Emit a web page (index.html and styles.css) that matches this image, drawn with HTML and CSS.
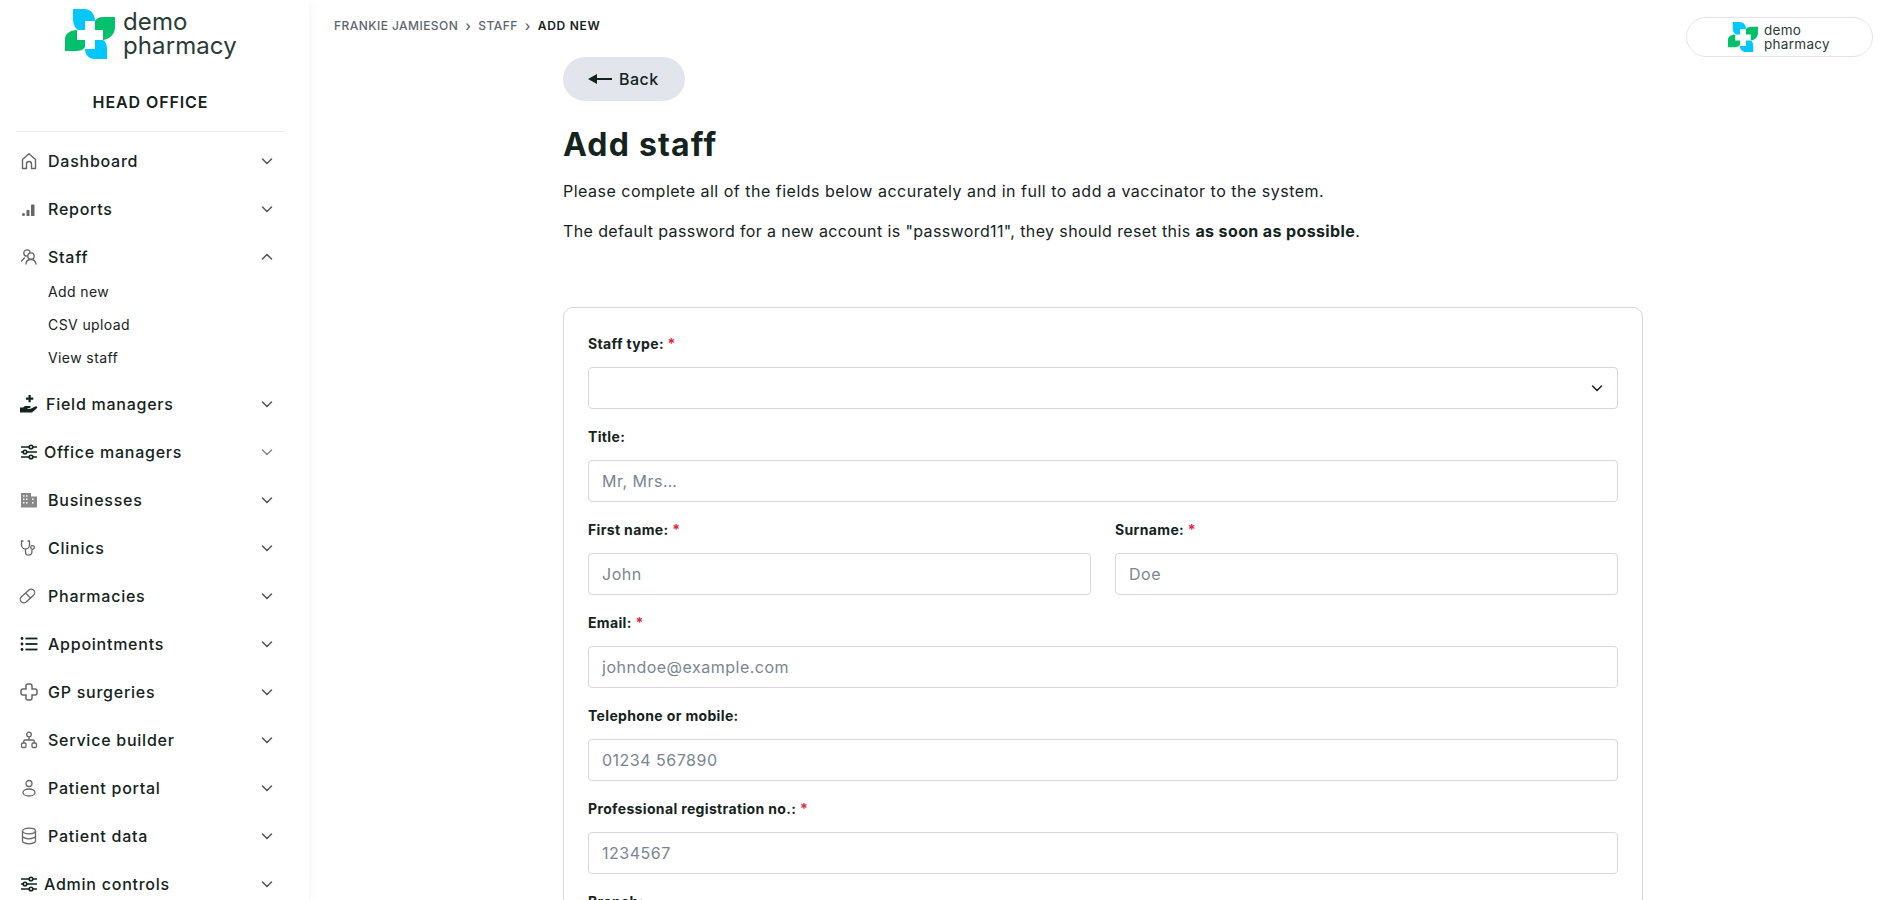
FILE: index.html
```html
<!DOCTYPE html>
<html>
<head>
<meta charset="utf-8"/>
<title>Add staff</title>
<link rel="stylesheet" href="styles.css">
</head>
<body>
<svg class="defs" width="0" height="0">
  <symbol id="logo" viewBox="0 0 50 50">
    <path fill="#00c8ff" d="M8 0H19C26 0 30 5 30 12H20V21H13C10 19 8 15 8 10Z"/>
    <path fill="#00c06b" d="M50 8V18C50 25 45 30 38 31V21H30V12C31 10 34 8 38 8Z"/>
    <path fill="#00c06b" d="M0 42V30C0 25 5 21 12 21V31H20V38C18 41 15 42 11 42Z"/>
    <path fill="#00c8ff" d="M42 50H30C24 50 20 46 20 40H30V31H38C41 33 42 36 42 40Z"/>
  </symbol>
  <symbol id="chev" viewBox="0 0 12 12"><path d="M1.500 4l4.500 4.500L10.500 4" fill="none" stroke="currentColor" stroke-width="1.500" stroke-linecap="round" stroke-linejoin="round"/></symbol>
  <symbol id="sliders" viewBox="0 0 18 18"><g fill="none" stroke="currentColor" stroke-width="1.600"><path d="M1 4h8M13 4h4M1 9h2M7 9h10M1 14h8M13 14h4"/><circle cx="11" cy="4" r="1.800"/><circle cx="5" cy="9" r="1.800"/><circle cx="11" cy="14" r="1.800"/></g></symbol>
</svg>

<div class="g-page">
  <!-- sidebar -->
  <aside class="m-side">
    <div class="side-logo">
      <svg class="logo-ico"><use href="#logo"/></svg>
      <div class="logo-txt">demo<br>pharmacy</div>
    </div>
    <div class="side-org">HEAD OFFICE</div>

    <nav class="side-nav">
      <a class="nav-row">
        <svg class="ico" viewBox="0 0 18 18"><path d="M2.500 16.500V7.500L9 1.800l6.500 5.700v9h-4v-4.500a2.500 2.500 0 0 0-5 0v4.500z" fill="none" stroke="currentColor" stroke-width="1.400" stroke-linejoin="round"/></svg>
        <span class="nav-txt">Dashboard</span><svg class="chev"><use href="#chev"/></svg>
      </a>
      <a class="nav-row">
        <svg class="ico" viewBox="0 0 18 18"><g fill="currentColor"><rect x="2" y="13" width="3" height="3" rx="1.500"/><rect x="6.500" y="10" width="3" height="6" rx=".6"/><rect x="11" y="4.500" width="3.500" height="11.500" rx=".6"/></g></svg>
        <span class="nav-txt">Reports</span><svg class="chev"><use href="#chev"/></svg>
      </a>
      <a class="nav-row">
        <svg class="ico" viewBox="0 0 18 18"><g fill="none" stroke="currentColor" stroke-width="1.300" stroke-linecap="round"><circle cx="7" cy="5" r="3.200"/><circle cx="11" cy="8" r="3.200" fill="#fff"/><path d="M1.500 13l3-3M6 16c0-3 2-4.500 5-4.500s4.500 1.500 5 4.500"/></g></svg>
        <span class="nav-txt">Staff</span><svg class="chev up"><use href="#chev"/></svg>
      </a>
      <ul class="nav-sub">
        <li>Add new</li>
        <li>CSV upload</li>
        <li>View staff</li>
      </ul>
      <a class="nav-row tight-a">
        <svg class="ico dark" viewBox="0 0 18 18"><path fill="currentColor" d="M8.500 0h2.200v2.500h2.600v2.200h-2.600v2.600H8.500V4.700H6V2.500h2.500zM0 12.500h3l2-1.500h4.500c1.500 0 1.500 2 0 2H7.500v.7h3l4.800-2.200c1.500-.7 2.700 1 1.300 2L12 17.500H0z"/></svg>
        <span class="nav-txt">Field managers</span><svg class="chev"><use href="#chev"/></svg>
      </a>
      <a class="nav-row tight-b">
        <svg class="ico dark"><use href="#sliders"/></svg>
        <span class="nav-txt">Office managers</span><svg class="chev faint"><use href="#chev"/></svg>
      </a>
      <a class="nav-row">
        <svg class="ico soft" viewBox="0 0 18 18"><path fill="currentColor" fill-rule="evenodd" d="M1 2h10v3.500h6V16.500H1zM3 4.200v1.500h1.500V4.200zm3 0v1.500h1.500V4.200zM3 7.500V9h1.500V7.500zm3 0V9h1.500V7.500zm6 0V9h1.500V7.500zM3 11v1.500h1.500V11zm3 0v1.500h1.500V11zm6 0v1.500h1.500V11z"/></svg>
        <span class="nav-txt">Businesses</span><svg class="chev"><use href="#chev"/></svg>
      </a>
      <a class="nav-row">
        <svg class="ico" viewBox="0 0 18 18"><g fill="none" stroke="currentColor" stroke-width="1.300" stroke-linecap="round"><path d="M3 2H1.500v4a4 4 0 0 0 8 0V2H8M5.500 10v3a3.200 3.200 0 0 0 6.400 0v-1.500"/><circle cx="12.500" cy="8.500" r="1.800"/></g></svg>
        <span class="nav-txt">Clinics</span><svg class="chev"><use href="#chev"/></svg>
      </a>
      <a class="nav-row">
        <svg class="ico" viewBox="0 0 18 18"><g fill="none" stroke="currentColor" stroke-width="1.300"><rect x="-1" y="5.500" width="17" height="7" rx="3.500" transform="rotate(-42 7.500 9)"/><path d="M6 6.500l5 5"/></g></svg>
        <span class="nav-txt">Pharmacies</span><svg class="chev"><use href="#chev"/></svg>
      </a>
      <a class="nav-row">
        <svg class="ico dark" viewBox="0 0 18 18"><g fill="currentColor"><circle cx="2" cy="3.500" r="1.400"/><circle cx="2" cy="9" r="1.400"/><circle cx="2" cy="14.500" r="1.400"/><rect x="5.500" y="2.600" width="12" height="1.800"/><rect x="5.500" y="8.100" width="12" height="1.800"/><rect x="5.500" y="13.600" width="12" height="1.800"/></g></svg>
        <span class="nav-txt">Appointments</span><svg class="chev"><use href="#chev"/></svg>
      </a>
      <a class="nav-row">
        <svg class="ico" viewBox="0 0 18 18"><path d="M6 3a2 2 0 0 1 2-2h2a2 2 0 0 1 2 2v3h3a2 2 0 0 1 2 2v2a2 2 0 0 1-2 2h-3v3a2 2 0 0 1-2 2H8a2 2 0 0 1-2-2v-3H3a2 2 0 0 1-2-2V8a2 2 0 0 1 2-2h3z" fill="none" stroke="currentColor" stroke-width="1.500"/></svg>
        <span class="nav-txt">GP surgeries</span><svg class="chev"><use href="#chev"/></svg>
      </a>
      <a class="nav-row">
        <svg class="ico" viewBox="0 0 18 18"><g fill="none" stroke="currentColor" stroke-width="1.300"><circle cx="9" cy="3.500" r="2.300"/><rect x="1.500" y="12" width="4.500" height="4.500" rx="1.200"/><rect x="12" y="12" width="4.500" height="4.500" rx="1.200"/><path d="M9 6v3M3.700 12v-1.500a1.500 1.500 0 0 1 1.500-1.500h7.600a1.500 1.500 0 0 1 1.500 1.500V12"/></g></svg>
        <span class="nav-txt">Service builder</span><svg class="chev"><use href="#chev"/></svg>
      </a>
      <a class="nav-row">
        <svg class="ico" viewBox="0 0 18 18"><g fill="none" stroke="currentColor" stroke-width="1.300"><circle cx="9" cy="4.500" r="3"/><ellipse cx="9" cy="13.500" rx="6" ry="3.500"/></g></svg>
        <span class="nav-txt">Patient portal</span><svg class="chev"><use href="#chev"/></svg>
      </a>
      <a class="nav-row">
        <svg class="ico" viewBox="0 0 18 18"><g fill="none" stroke="currentColor" stroke-width="1.300"><ellipse cx="9" cy="4" rx="6.500" ry="2.800"/><path d="M2.500 4v10c0 1.500 3 2.800 6.500 2.800s6.500-1.300 6.500-2.800V4M2.500 9c0 1.500 3 2.800 6.500 2.800s6.500-1.300 6.500-2.800"/></g></svg>
        <span class="nav-txt">Patient data</span><svg class="chev"><use href="#chev"/></svg>
      </a>
      <a class="nav-row tight-b">
        <svg class="ico dark"><use href="#sliders"/></svg>
        <span class="nav-txt">Admin controls</span><svg class="chev"><use href="#chev"/></svg>
      </a>
    </nav>
  </aside>

  <!-- main -->
  <main class="m-main">
    <header class="main-top">
      <div class="crumbs">
        <span>FRANKIE JAMIESON</span><i>&#8250;</i><span>STAFF</span><i>&#8250;</i><b>ADD NEW</b>
      </div>
      <div class="top-pill">
        <svg class="pill-ico"><use href="#logo"/></svg>
        <div class="pill-txt">demo<br>pharmacy</div>
      </div>
    </header>

    <section class="main-con">
      <a class="btn-back">
        <svg class="back-ico" viewBox="0 0 24 12"><path d="M0 6l9-5v4h15v2H9v4z" fill="currentColor"/></svg>
        Back
      </a>
      <h1>Add staff</h1>
      <p class="intro">Please complete all of the fields below accurately and in full to add a vaccinator to the system.</p>
      <p>The default password for a new account is "password11", they should reset this <strong>as soon as possible</strong>.</p>

      <form class="m-card">
        <div class="fld">
          <label>Staff type: <em>*</em></label>
          <div class="sel-wrap">
            <select><option></option></select>
            <svg class="sel-chev"><use href="#chev"/></svg>
          </div>
        </div>
        <div class="fld">
          <label>Title:</label>
          <input type="text" placeholder="Mr, Mrs…">
        </div>
        <div class="fld-row">
          <div class="fld">
            <label>First name: <em>*</em></label>
            <input type="text" placeholder="John">
          </div>
          <div class="fld">
            <label>Surname: <em>*</em></label>
            <input type="text" placeholder="Doe">
          </div>
        </div>
        <div class="fld">
          <label>Email: <em>*</em></label>
          <input type="text" placeholder="johndoe@example.com">
        </div>
        <div class="fld">
          <label>Telephone or mobile:</label>
          <input type="text" placeholder="01234 567890">
        </div>
        <div class="fld">
          <label>Professional registration no.: <em>*</em></label>
          <input type="text" placeholder="1234567">
        </div>
        <div class="fld">
          <label>Branch:</label>
        </div>
      </form>
    </section>
  </main>
</div>
</body>
</html>
```

FILE: styles.css
```css
/* reset */
html,body,h1,p,ul,li{margin:0;padding:0;}
li{list-style:none;}
html,body{height:100%;overflow:hidden;}
body{font-family:Inter,"Liberation Sans",sans-serif;color:#14231d;background:#fff;font-size:16px;}
.defs{position:absolute;}

.g-page{display:flex;height:100vh;}

/* sidebar */
.m-side{flex:0 0 309px;width:309px;box-shadow:0 0 12px rgba(0,0,0,.06);overflow:hidden;}
.side-logo{display:flex;align-items:center;padding:9px 0 0 65px;height:50px;}
.logo-ico{width:50px;height:50px;flex:none;}
.logo-txt{margin-left:8px;font-size:24px;line-height:24px;color:#2a3b36;letter-spacing:.1px;}
.side-org{margin:0 24px 0 16px;height:73px;border-bottom:1px solid #eee;box-sizing:border-box;padding-top:31px;text-align:center;font-size:16px;line-height:24px;font-weight:600;letter-spacing:.9px;}
.side-nav{padding:5px 36px 0 20px;}
.nav-row{display:flex;align-items:center;gap:10px;height:48px;color:#14231d;}
.nav-row.tight-a{gap:8px;}
.nav-row.tight-b{gap:6px;}
.ico{width:18px;height:18px;flex:none;color:#666;overflow:visible;}
.ico.dark{color:#14231d;}
.ico.soft{color:#888;}
.nav-txt{flex:1;font-size:16px;font-weight:500;letter-spacing:.75px;}
.chev{width:12px;height:12px;flex:none;color:#555;}
.chev.up{transform:rotate(180deg);}
.chev.faint{color:#888;}
.nav-sub{margin:-6px 0 6px 28px;}
.nav-sub li{height:33px;line-height:33px;font-size:14px;letter-spacing:.4px;}

/* main */
.m-main{flex:1;min-width:0;}
.main-top{display:flex;justify-content:space-between;align-items:flex-start;height:57px;padding:0 19px 0 25px;}
.crumbs{display:flex;align-items:center;margin-top:15px;height:20px;font-size:12px;font-weight:500;color:#5c6670;letter-spacing:.45px;}
.crumbs i{font-style:normal;margin:0 7px;font-size:14px;}
.crumbs b{font-weight:600;color:#14231d;letter-spacing:.7px;}
.top-pill{display:flex;align-items:center;box-sizing:border-box;width:187px;height:40px;margin-top:17px;padding-left:41px;border:1px solid #e2e5ec;border-radius:20px;}
.pill-ico{width:30px;height:30px;flex:none;}
.pill-txt{margin-left:6px;font-size:13.500px;line-height:14px;color:#2a3b36;letter-spacing:.3px;}

.main-con{width:1080px;margin-left:254px;}
.btn-back{display:inline-flex;align-items:center;gap:7px;box-sizing:border-box;width:122px;height:44px;padding-left:25px;border-radius:22px;background:#e2e5ec;font-size:16px;font-weight:500;letter-spacing:.5px;}
.back-ico{width:24px;height:12px;flex:none;}
h1{margin:25px 0 15px;font-size:32px;line-height:38px;font-weight:700;letter-spacing:1.2px;}
.main-con p{margin-bottom:16px;line-height:24px;font-size:16px;letter-spacing:.38px;}
.main-con p.intro{letter-spacing:.5px;}
.main-con strong{font-weight:700;}

/* form */
.m-card{box-sizing:border-box;margin-top:64px;padding:26px 24px 0;height:800px;border:1px solid #d5d7e3;border-radius:10px;}
.fld{margin-bottom:18px;}
.fld label{display:block;height:20px;line-height:20px;margin-bottom:13px;font-size:14px;font-weight:700;letter-spacing:.35px;}
.fld label em{font-style:normal;color:#e3263f;}
.fld input,.fld select{display:block;box-sizing:border-box;width:100%;height:42px;padding:0 13px;background:#fff;border:1px solid #d5d7e3;border-radius:4px;font:16px Inter,"Liberation Sans",sans-serif;letter-spacing:.5px;color:#14231d;outline:0;appearance:none;}
.fld input::placeholder{color:#7a8590;opacity:1;}
.fld-row{display:grid;grid-template-columns:1fr 1fr;gap:24px;}
.sel-wrap{position:relative;}
.sel-chev{position:absolute;right:15px;top:15px;width:12px;height:12px;color:#14231d;}
```
